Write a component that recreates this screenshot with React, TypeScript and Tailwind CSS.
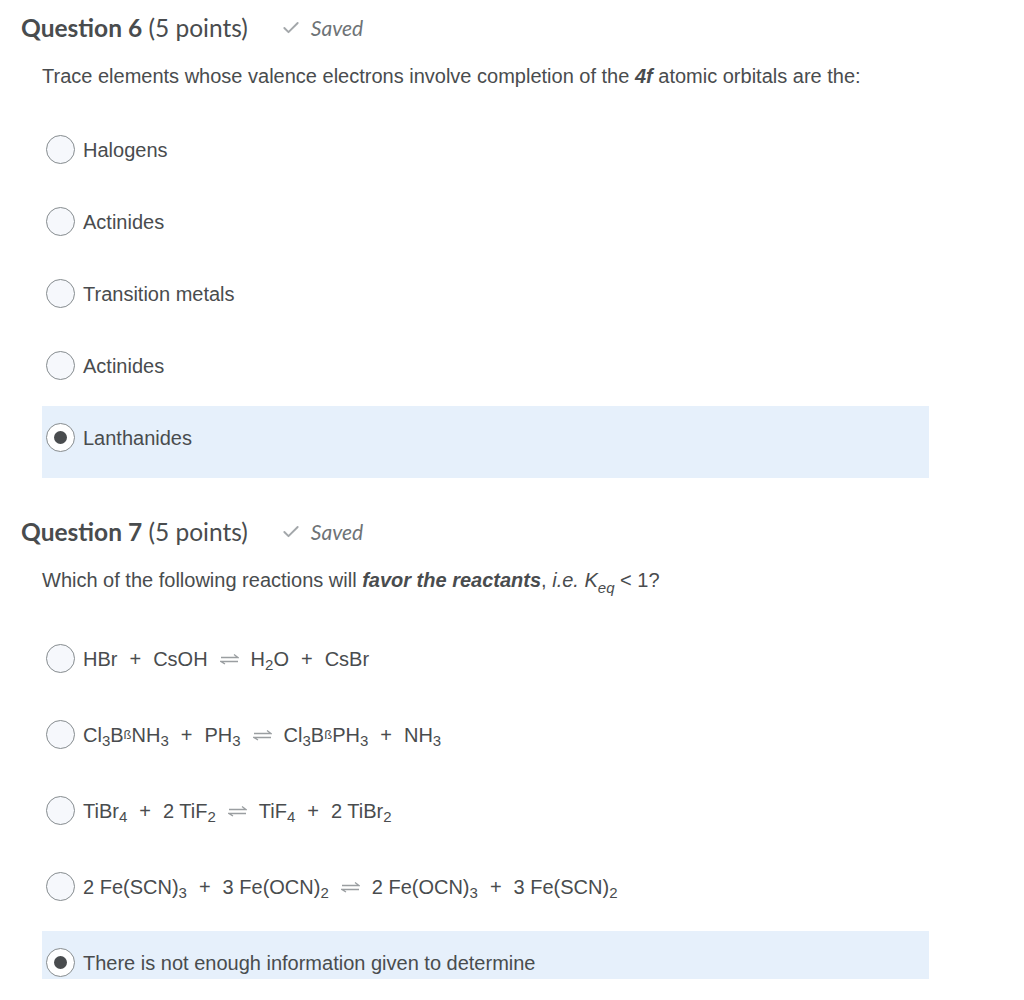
import React from 'react';
import { Check } from 'lucide-react';

const Sub: React.FC<{ children: React.ReactNode }> = ({ children }) => (
  <span className="text-[15px] relative top-[6px] leading-none">{children}</span>
);

const Plus = () => <span className="mx-[12px]">+</span>;

const Eq = () => (
  <svg className="mx-[12px] inline-block" width="19" height="12" viewBox="0 0 19 12" fill="none" stroke="#9a9ea1" strokeWidth="1.3">
    <path d="M1 4.5H18L14 1.5" />
    <path d="M18 8.5H1L5 11" />
  </svg>
);

const Beta = () => <span className="text-[13px]">ß</span>;

const Radio: React.FC<{ checked?: boolean }> = ({ checked }) => (
  <span
    className={
      checked
        ? 'w-[29px] h-[29px] shrink-0 rounded-full border border-[#868c8f] bg-white flex items-center justify-center'
        : 'w-[29px] h-[29px] shrink-0 rounded-full border border-[#868c8f] bg-[#f6f8fc]'
    }
  >
    {checked && <span className="w-[13px] h-[13px] rounded-full bg-[#494c4e]" />}
  </span>
);

const Option: React.FC<{ checked?: boolean; tall?: boolean; short?: boolean; children: React.ReactNode }> = ({
  checked,
  tall,
  short,
  children,
}) => (
  <div
    className={[
      'flex items-start pl-[4px] pt-[17px]',
      short ? 'h-[48px]' : tall ? 'h-[76px]' : 'h-[72px]',
      checked ? 'bg-[#e6f0fb]' : '',
    ].join(' ')}
  >
    <Radio checked={checked} />
    <span className="ml-[8px] h-[29px] flex items-center whitespace-nowrap">{children}</span>
  </div>
);

const Heading: React.FC<{ n: number }> = ({ n }) => (
  <div className="flex items-center h-[32px] pl-[21px] text-[#494c4e]" style={{ fontFamily: 'Lato, sans-serif' }}>
    <span className="text-[24.5px]">
      <span className="font-bold">Question {n}</span> (5 points)
    </span>
    <Check className="ml-[33px] w-[20px] h-[20px] text-[#a3a7aa]" strokeWidth={2.3} />
    <span className="ml-[10px] text-[21px] italic text-[#6e7376]">Saved</span>
  </div>
);

export default function App() {
  return (
    <div className="w-[1024px] h-[1000px] overflow-hidden bg-white pt-[12px] text-[#494c4e]">
      <Heading n={6} />
      <div className="ml-[42px] w-[887px] text-[20px]" style={{ fontFamily: '"Liberation Sans", Arial, sans-serif' }}>
        <p className="mt-[19px] leading-[27px]">
          Trace elements whose valence electrons involve completion of the <b className="italic">4f</b> atomic orbitals are the:
        </p>
        <div className="mt-[28px]">
          <Option>Halogens</Option>
          <Option>Actinides</Option>
          <Option>Transition metals</Option>
          <Option>Actinides</Option>
          <Option checked>Lanthanides</Option>
        </div>
      </div>

      <div className="mt-[38px]">
        <Heading n={7} />
      </div>
      <div className="ml-[42px] w-[887px] text-[20px]" style={{ fontFamily: '"Liberation Sans", Arial, sans-serif' }}>
        <p className="mt-[19px] leading-[27px]">
          Which of the following reactions will <b className="italic">favor the reactants</b>, <i>i.e. K</i>
          <Sub>
            <i>eq</i>
          </Sub>{' '}
          &lt; 1?
        </p>
        <div className="mt-[33px]">
          <Option tall>
            HBr<Plus />CsOH<Eq />H<Sub>2</Sub>O<Plus />CsBr
          </Option>
          <Option tall>
            Cl<Sub>3</Sub>B<Beta />NH<Sub>3</Sub>
            <Plus />
            PH<Sub>3</Sub>
            <Eq />
            Cl<Sub>3</Sub>B<Beta />PH<Sub>3</Sub>
            <Plus />
            NH<Sub>3</Sub>
          </Option>
          <Option tall>
            TiBr<Sub>4</Sub>
            <Plus />2 TiF<Sub>2</Sub>
            <Eq />
            TiF<Sub>4</Sub>
            <Plus />2 TiBr<Sub>2</Sub>
          </Option>
          <Option tall>
            2 Fe(SCN)<Sub>3</Sub>
            <Plus />3 Fe(OCN)<Sub>2</Sub>
            <Eq />2 Fe(OCN)<Sub>3</Sub>
            <Plus />3 Fe(SCN)<Sub>2</Sub>
          </Option>
          <Option checked short>
            There is not enough information given to determine
          </Option>
        </div>
      </div>
    </div>
  );
}
